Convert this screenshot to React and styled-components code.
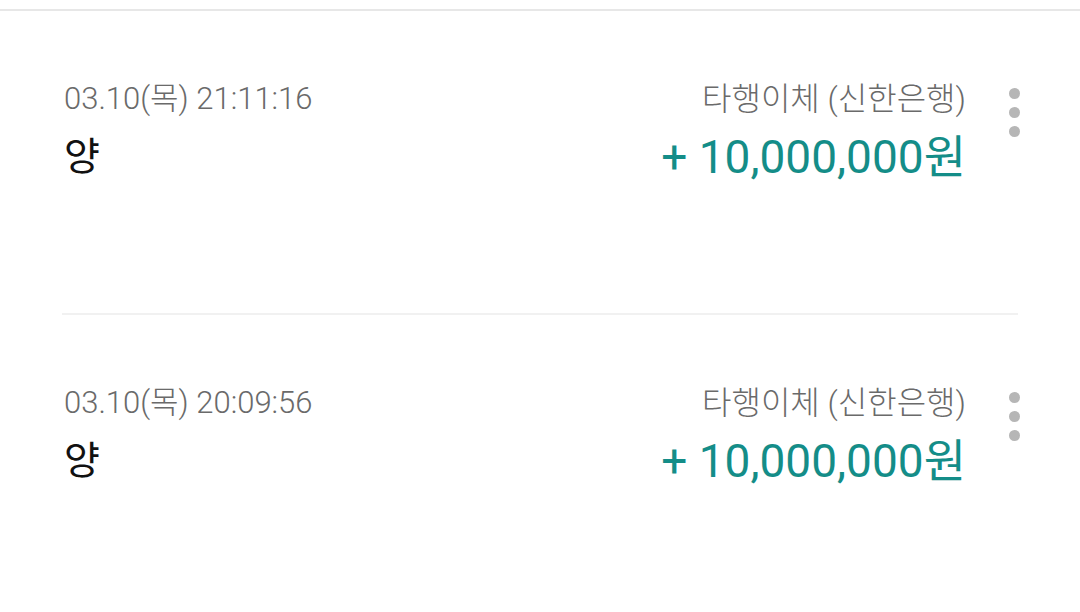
import React from 'react';
import styled, { createGlobalStyle } from 'styled-components';

const GlobalStyle = createGlobalStyle`
  html, body {
    margin: 0;
    padding: 0;
    background: #fff;
  }
  body {
    font-family: Roboto, "Noto Sans CJK KR", sans-serif;
    -webkit-font-smoothing: antialiased;
  }
`;

// Styles
const Page = styled.div`
  width: 1080px;
  height: 612px;
  overflow: hidden;
  background: #fff;
  padding-top: 9px;
  box-sizing: border-box;
`;

const List = styled.div`
  border-top: 2px solid #e7e7e7;
`;

const Item = styled.div`
  display: flex;
  align-items: flex-start;
  height: 302px;
  box-sizing: border-box;
  padding: 68px 60px 0 64px;
`;

const Left = styled.div`
  flex: 1;
  display: flex;
  flex-direction: column;
`;

const Right = styled.div`
  display: flex;
  flex-direction: column;
  align-items: flex-end;
`;

const DateText = styled.span`
  font-size: 31px;
  line-height: 40px;
  font-weight: 300;
  color: #6a6a6a;
`;

const Name = styled.span`
  margin-top: 9px;
  font-size: 39px;
  line-height: 58px;
  color: #111;
`;

const Type = styled.span`
  font-size: 32px;
  line-height: 40px;
  font-weight: 300;
  color: #6a6a6a;
`;

const Amount = styled.span`
  margin-top: 10px;
  font-size: 46px;
  line-height: 56px;
  color: #148d88;
  white-space: pre;
`;

const Kebab = styled.button`
  display: flex;
  flex-direction: column;
  gap: 8px;
  margin: 9px 0 0 43px;
  padding: 0;
  border: none;
  background: none;
`;

const Dot = styled.span`
  width: 11px;
  height: 11px;
  border-radius: 50%;
  background: #b6b6b6;
`;

const Divider = styled.div`
  height: 2px;
  margin: 0 62px;
  background: #f1f1f1;
`;

const transactions = [
  { date: '03.10(목) 21:11:16', name: '양', type: '타행이체 (신한은행)', amount: '10,000,000' },
  { date: '03.10(목) 20:09:56', name: '양', type: '타행이체 (신한은행)', amount: '10,000,000' },
];

const Transaction = ({ tx }) => (
  <Item>
    <Left>
      <DateText>{tx.date}</DateText>
      <Name>{tx.name}</Name>
    </Left>
    <Right>
      <Type>{tx.type}</Type>
      <Amount>{`+ ${tx.amount}원`}</Amount>
    </Right>
    <Kebab aria-label="more">
      <Dot />
      <Dot />
      <Dot />
    </Kebab>
  </Item>
);

const App = () => (
  <Page>
    <GlobalStyle />
    <List>
      {transactions.map((tx, i) => (
        <React.Fragment key={i}>
          {i > 0 && <Divider />}
          <Transaction tx={tx} />
        </React.Fragment>
      ))}
    </List>
  </Page>
);

export default App;
